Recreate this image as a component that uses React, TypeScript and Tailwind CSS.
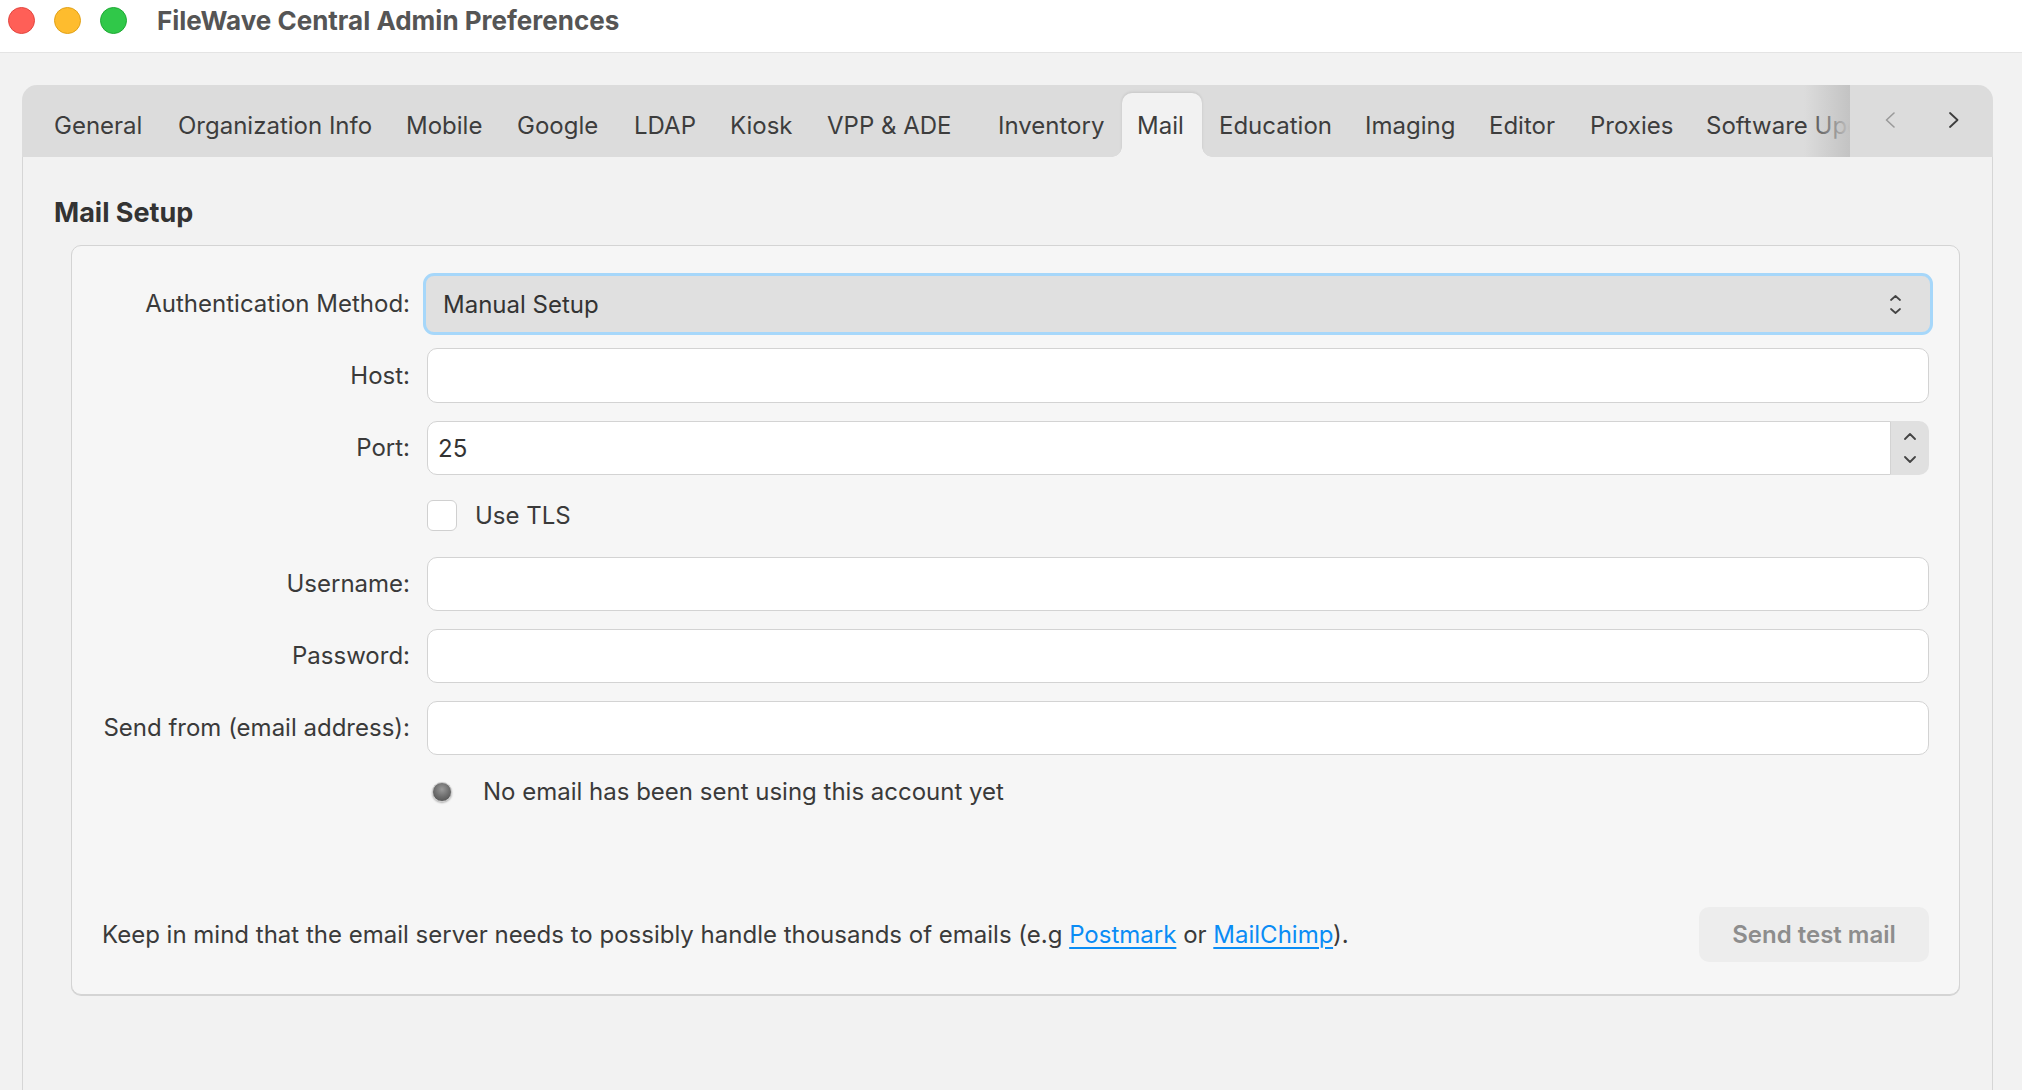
import React from "react";

const tabs: { label: string; w: number; pl: number }[] = [
  { label: "General", w: 124, pl: 18 },
  { label: "Organization Info", w: 228, pl: 18 },
  { label: "Mobile", w: 111, pl: 18 },
  { label: "Google", w: 117, pl: 18 },
  { label: "LDAP", w: 96, pl: 18 },
  { label: "Kiosk", w: 96, pl: 18 },
  { label: "VPP & ADE", w: 165, pl: 19 },
  { label: "Inventory", w: 149, pl: 25 },
  { label: "Mail", w: 80, pl: 15 },
  { label: "Education", w: 145, pl: 17 },
  { label: "Imaging", w: 125, pl: 18 },
  { label: "Editor", w: 100, pl: 17 },
  { label: "Proxies", w: 118, pl: 18 },
  { label: "Software Update", w: 0, pl: 16 },
];

function ChevUp({ w = 12, h = 7, color = "#444", sw = 2 }: { w?: number; h?: number; color?: string; sw?: number }) {
  return (
    <svg width={w} height={h} viewBox={`0 0 ${w} ${h}`} fill="none">
      <polyline points={`1,${h - 1} ${w / 2},1 ${w - 1},${h - 1}`} stroke={color} strokeWidth={sw} strokeLinecap="round" strokeLinejoin="round" />
    </svg>
  );
}
function ChevDown({ w = 12, h = 7, color = "#444", sw = 2 }: { w?: number; h?: number; color?: string; sw?: number }) {
  return (
    <svg width={w} height={h} viewBox={`0 0 ${w} ${h}`} fill="none">
      <polyline points={`1,1 ${w / 2},${h - 1} ${w - 1},1`} stroke={color} strokeWidth={sw} strokeLinecap="round" strokeLinejoin="round" />
    </svg>
  );
}

function Label({ children }: { children: React.ReactNode }) {
  return <div className="w-[338px] shrink-0 text-right text-[24px] text-[#3a3a3a]">{children}</div>;
}

function TextField({ h }: { h: number }) {
  return (
    <div
      className="flex-1 ml-[17px] mr-[30px] bg-white border-[1.5px] border-[#d3d3d3] rounded-[10px]"
      style={{ height: h }}
    />
  );
}

export default function App() {
  return (
    <div className="w-[2022px] h-[1090px] bg-[#f2f2f2] overflow-hidden flex flex-col font-['Inter',sans-serif] text-[#3a3a3a]">
      {/* Title bar */}
      <div className="h-[53px] shrink-0 bg-white border-b border-[#e4e4e4] flex items-start pl-[8px]">
        <div className="flex gap-[19px] mt-[7px]">
          <div className="w-[27px] h-[27px] rounded-full bg-[#ff5f57] border border-[#e2463f]" />
          <div className="w-[27px] h-[27px] rounded-full bg-[#febc2e] border border-[#e1a116]" />
          <div className="w-[27px] h-[27px] rounded-full bg-[#30c849] border border-[#1ea934]" />
        </div>
        <div className="ml-[30px] mt-[6px] leading-[30px] text-[26px] font-bold text-[#555555]">
          FileWave Central Admin Preferences
        </div>
      </div>

      {/* Content */}
      <div className="flex-1 min-h-0 flex flex-col pt-[32px] pl-[22px] pr-[29px]">
        <div className="flex-1 flex flex-col">
          {/* Tab bar */}
          <div className="h-[72px] shrink-0 bg-[#dcdcdc] rounded-t-[15px] flex">
            <div className="relative w-[1828px] shrink-0 overflow-hidden flex items-end pl-[14px]">
              {tabs.map((t) => {
                const sel = t.label === "Mail";
                return (
                  <div
                    key={t.label}
                    className={
                      "relative h-[64px] shrink-0 flex items-center pt-[1px] whitespace-nowrap text-[24px] text-[#3d3d3d] " +
                      (sel ? "bg-[#f2f2f2] rounded-t-[10px] shadow-[0_-1px_3px_rgba(0,0,0,0.10)]" : "")
                    }
                    style={{ width: t.w ? t.w : undefined, paddingLeft: t.pl }}
                  >
                    {t.label}
                    {sel && (
                      <>
                        <span className="absolute bottom-0 left-[-10px] w-[10px] h-[10px] bg-[radial-gradient(circle_at_0_0,transparent_9.5px,#f2f2f2_10px)]" />
                        <span className="absolute bottom-0 right-[-10px] w-[10px] h-[10px] bg-[radial-gradient(circle_at_100%_0,transparent_9.5px,#f2f2f2_10px)]" />
                      </>
                    )}
                  </div>
                );
              })}
              <div className="absolute right-0 top-0 bottom-0 w-[46px] bg-gradient-to-r from-[rgba(200,200,200,0)] to-[#c3c3c3]" />
            </div>
            <div className="flex-1 flex items-center pb-[2px]">
              <div className="ml-[35px]">
                <svg width="10" height="16" viewBox="0 0 10 16" fill="none">
                  <polyline points="9,1 1.5,8 9,15" stroke="#9a9a9a" strokeWidth="1.6" strokeLinecap="round" strokeLinejoin="round" />
                </svg>
              </div>
              <div className="ml-[54px]">
                <svg width="10" height="16" viewBox="0 0 10 16" fill="none">
                  <polyline points="1,1 8.5,8 1,15" stroke="#3d3d3d" strokeWidth="1.8" strokeLinecap="round" strokeLinejoin="round" />
                </svg>
              </div>
            </div>
          </div>

          {/* Body */}
          <div className="flex-1 bg-[#f2f2f2] border-x border-[#d6d6d6] flex flex-col">
            <div className="mt-[40px] ml-[31px] h-[32px] leading-[32px] text-[27px] font-bold text-[#333333]">
              Mail Setup
            </div>

            <div className="mt-[16px] ml-[48px] mr-[32px] h-[750px] bg-[#f6f6f6] border border-[#d4d4d4] rounded-[10px] shadow-[0_1px_0_#d4d4d4] flex flex-col">
              {/* Authentication method */}
              <div className="mt-[27px] h-[62px] flex items-center">
                <Label>Authentication Method:</Label>
                <div className="flex-1 ml-[13px] mr-[26px] h-[62px] bg-[#e0e0e0] border-[3px] border-[#a6d7fa] rounded-[11px] flex items-center pl-[17px] pr-[29px]">
                  <span className="flex-1 text-[24px] text-[#333333] pt-[2px]">Manual Setup</span>
                  <div className="flex flex-col items-center gap-[7px]">
                    <ChevUp w={11} h={6} sw={1.7} />
                    <ChevDown w={11} h={6} sw={1.7} />
                  </div>
                </div>
              </div>

              {/* Host */}
              <div className="mt-[13px] h-[55px] flex items-center">
                <Label>Host:</Label>
                <TextField h={55} />
              </div>

              {/* Port */}
              <div className="mt-[18px] h-[54px] flex items-center">
                <Label>Port:</Label>
                <div className="flex-1 ml-[17px] mr-[30px] h-[54px] flex">
                  <div className="flex-1 bg-white border-[1.5px] border-[#d3d3d3] rounded-l-[10px] flex items-center pl-[10px] pt-[1px] text-[24px] text-[#333333]">
                    25
                  </div>
                  <div className="w-[38px] bg-[#e0e0e0] rounded-r-[10px] flex flex-col items-center justify-between py-[12px]">
                    <ChevUp w={12} h={7} sw={1.8} />
                    <ChevDown w={12} h={7} sw={1.8} />
                  </div>
                </div>
              </div>

              {/* Use TLS */}
              <div className="mt-[25px] h-[31px] flex items-center">
                <div className="w-[338px] shrink-0" />
                <div className="ml-[17px] w-[30px] h-[31px] bg-white border-[1.5px] border-[#d0d0d0] rounded-[6px]" />
                <span className="ml-[18px] text-[24px] text-[#3a3a3a]">Use TLS</span>
              </div>

              {/* Username */}
              <div className="mt-[26px] h-[54px] flex items-center">
                <Label>Username:</Label>
                <TextField h={54} />
              </div>

              {/* Password */}
              <div className="mt-[18px] h-[54px] flex items-center">
                <Label>Password:</Label>
                <TextField h={54} />
              </div>

              {/* Send from */}
              <div className="mt-[18px] h-[54px] flex items-center">
                <Label>Send from (email address):</Label>
                <TextField h={54} />
              </div>

              {/* Status */}
              <div className="mt-[27px] h-[20px] flex items-center">
                <div className="w-[338px] shrink-0" />
                <div className="ml-[22px] w-[20px] h-[20px] rounded-full border border-[#c8c8c8] bg-[radial-gradient(circle_at_50%_35%,#9a9a9a_0%,#6e6e6e_50%,#4a4a4a_100%)] shadow-[0_1px_2px_rgba(0,0,0,0.3)]" />
                <span className="ml-[31px] text-[24px] text-[#3a3a3a] whitespace-nowrap">
                  No email has been sent using this account yet
                </span>
              </div>

              <div className="flex-1" />

              {/* Bottom row */}
              <div className="h-[55px] mb-[32px] flex items-center pl-[30px] pr-[30px]">
                <div className="flex-1 text-[24px] text-[#3a3a3a] whitespace-nowrap">
                  Keep in mind that the email server needs to possibly handle thousands of emails (e.g{" "}
                  <a className="text-[#0a8cf5] underline decoration-2 underline-offset-[4px]">Postmark</a> or{" "}
                  <a className="text-[#0a8cf5] underline decoration-2 underline-offset-[4px]">MailChimp</a>).
                </div>
                <div className="w-[230px] h-[55px] rounded-[10px] bg-[#ededed] flex items-center justify-center pt-[1px] text-[24px] font-semibold text-[#8d8d8d]">
                  Send test mail
                </div>
              </div>
            </div>
          </div>
        </div>
      </div>
    </div>
  );
}
